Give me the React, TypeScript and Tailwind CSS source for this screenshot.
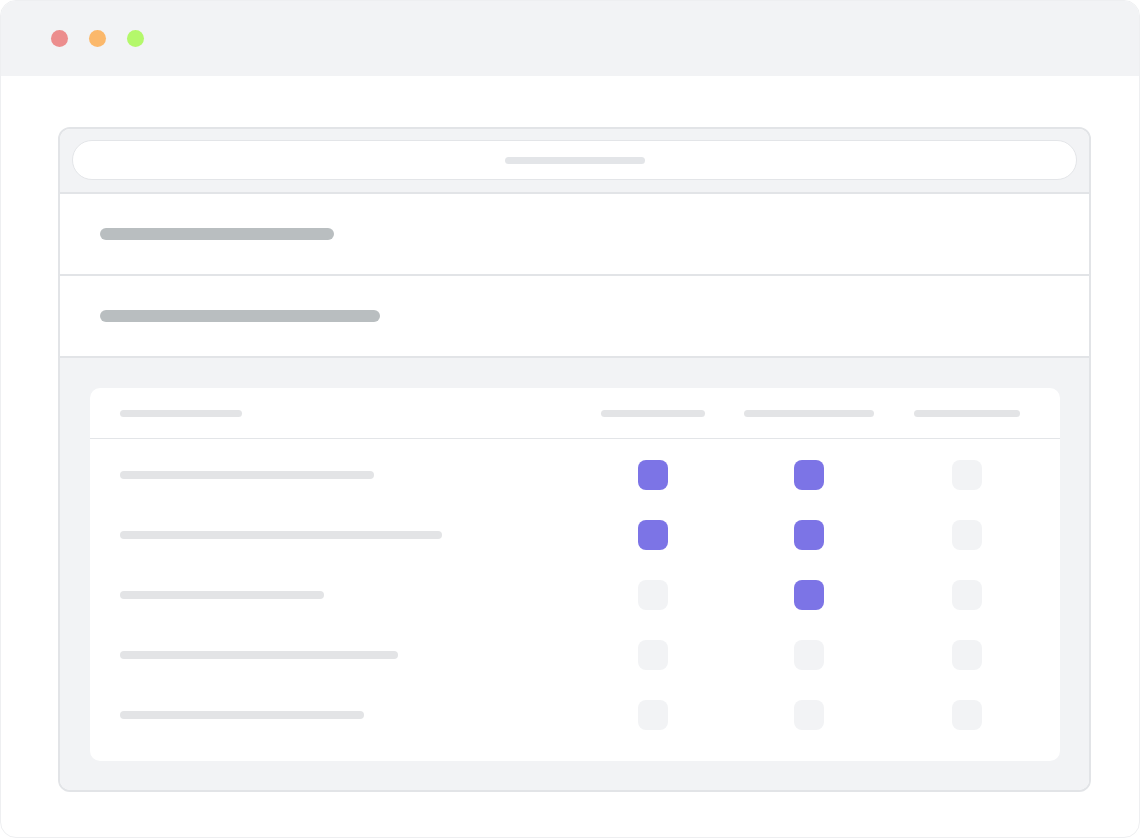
import React from 'react';

// 行ごとのラベル幅とチェック状態
const rows: { label: number; checks: boolean[] }[] = [
  { label: 254, checks: [true, true, false] },
  { label: 322, checks: [true, true, false] },
  { label: 204, checks: [false, true, false] },
  { label: 278, checks: [false, false, false] },
  { label: 244, checks: [false, false, false] },
];

const headerBars = [104, 130, 106];

function Cell({ on }: { on: boolean }) {
  return (
    <div className="flex justify-center">
      <div className={`w-[30px] h-[30px] rounded-[8px] ${on ? 'bg-[#7c74e6]' : 'bg-[#f2f3f5]'}`} />
    </div>
  );
}

export default function App() {
  return (
    <div className="w-[1140px] h-[838px] bg-white" style={{ fontFamily: '"Liberation Sans", sans-serif' }}>
      <div className="w-[1140px] h-[838px] border border-[#eeeff1] rounded-[16px] overflow-hidden flex flex-col">
        {/* タイトルバー */}
        <div className="h-[75px] bg-[#f2f3f5] flex items-center gap-[21px] pl-[50px] shrink-0">
          <div className="w-[17px] h-[17px] rounded-full bg-[#ec8d8d]" />
          <div className="w-[17px] h-[17px] rounded-full bg-[#fbb86b]" />
          <div className="w-[17px] h-[17px] rounded-full bg-[#b4f86b]" />
        </div>

        <div className="flex-1 pt-[51px] pl-[57px]">
          <div className="w-[1033px] h-[665px] border-2 border-[#e2e4e7] rounded-[12px] overflow-hidden flex flex-col">
            {/* 検索バー */}
            <div className="bg-[#f2f3f5] px-[12px] pt-[11px] pb-[12px] border-b-2 border-[#e2e4e7]">
              <div className="h-[40px] rounded-full bg-white border border-[#e3e5e8] flex items-center justify-center">
                <div className="w-[140px] h-[7px] rounded-full bg-[#e3e5e8]" />
              </div>
            </div>

            <div className="h-[82px] bg-white border-b-2 border-[#e2e4e7] flex items-center pl-[40px]">
              <div className="w-[234px] h-[12px] rounded-full bg-[#b9bec0]" />
            </div>
            <div className="h-[82px] bg-white border-b-2 border-[#e2e4e7] flex items-center pl-[40px]">
              <div className="w-[280px] h-[12px] rounded-full bg-[#b9bec0]" />
            </div>

            {/* テーブル */}
            <div className="flex-1 bg-[#f2f3f5] pt-[30px] pb-[29px] pl-[30px] pr-[29px]">
              <div className="h-full bg-white rounded-[10px] flex flex-col">
                <div className="h-[51px] border-b border-[#e3e5e8] px-[30px] grid grid-cols-[1fr_122px_190px_126px] items-center">
                  <div className="w-[122px] h-[7px] rounded-full bg-[#e3e4e6]" />
                  {headerBars.map((w, i) => (
                    <div key={i} className="flex justify-center">
                      <div className="h-[7px] rounded-full bg-[#e3e4e6]" style={{ width: w }} />
                    </div>
                  ))}
                </div>
                <div className="pt-[6px] px-[30px]">
                  {rows.map((r, i) => (
                    <div key={i} className="h-[60px] grid grid-cols-[1fr_122px_190px_126px] items-center">
                      <div className="h-[8px] rounded-full bg-[#e3e4e6]" style={{ width: r.label }} />
                      {r.checks.map((c, j) => (
                        <Cell key={j} on={c} />
                      ))}
                    </div>
                  ))}
                </div>
              </div>
            </div>
          </div>
        </div>
      </div>
    </div>
  );
}
